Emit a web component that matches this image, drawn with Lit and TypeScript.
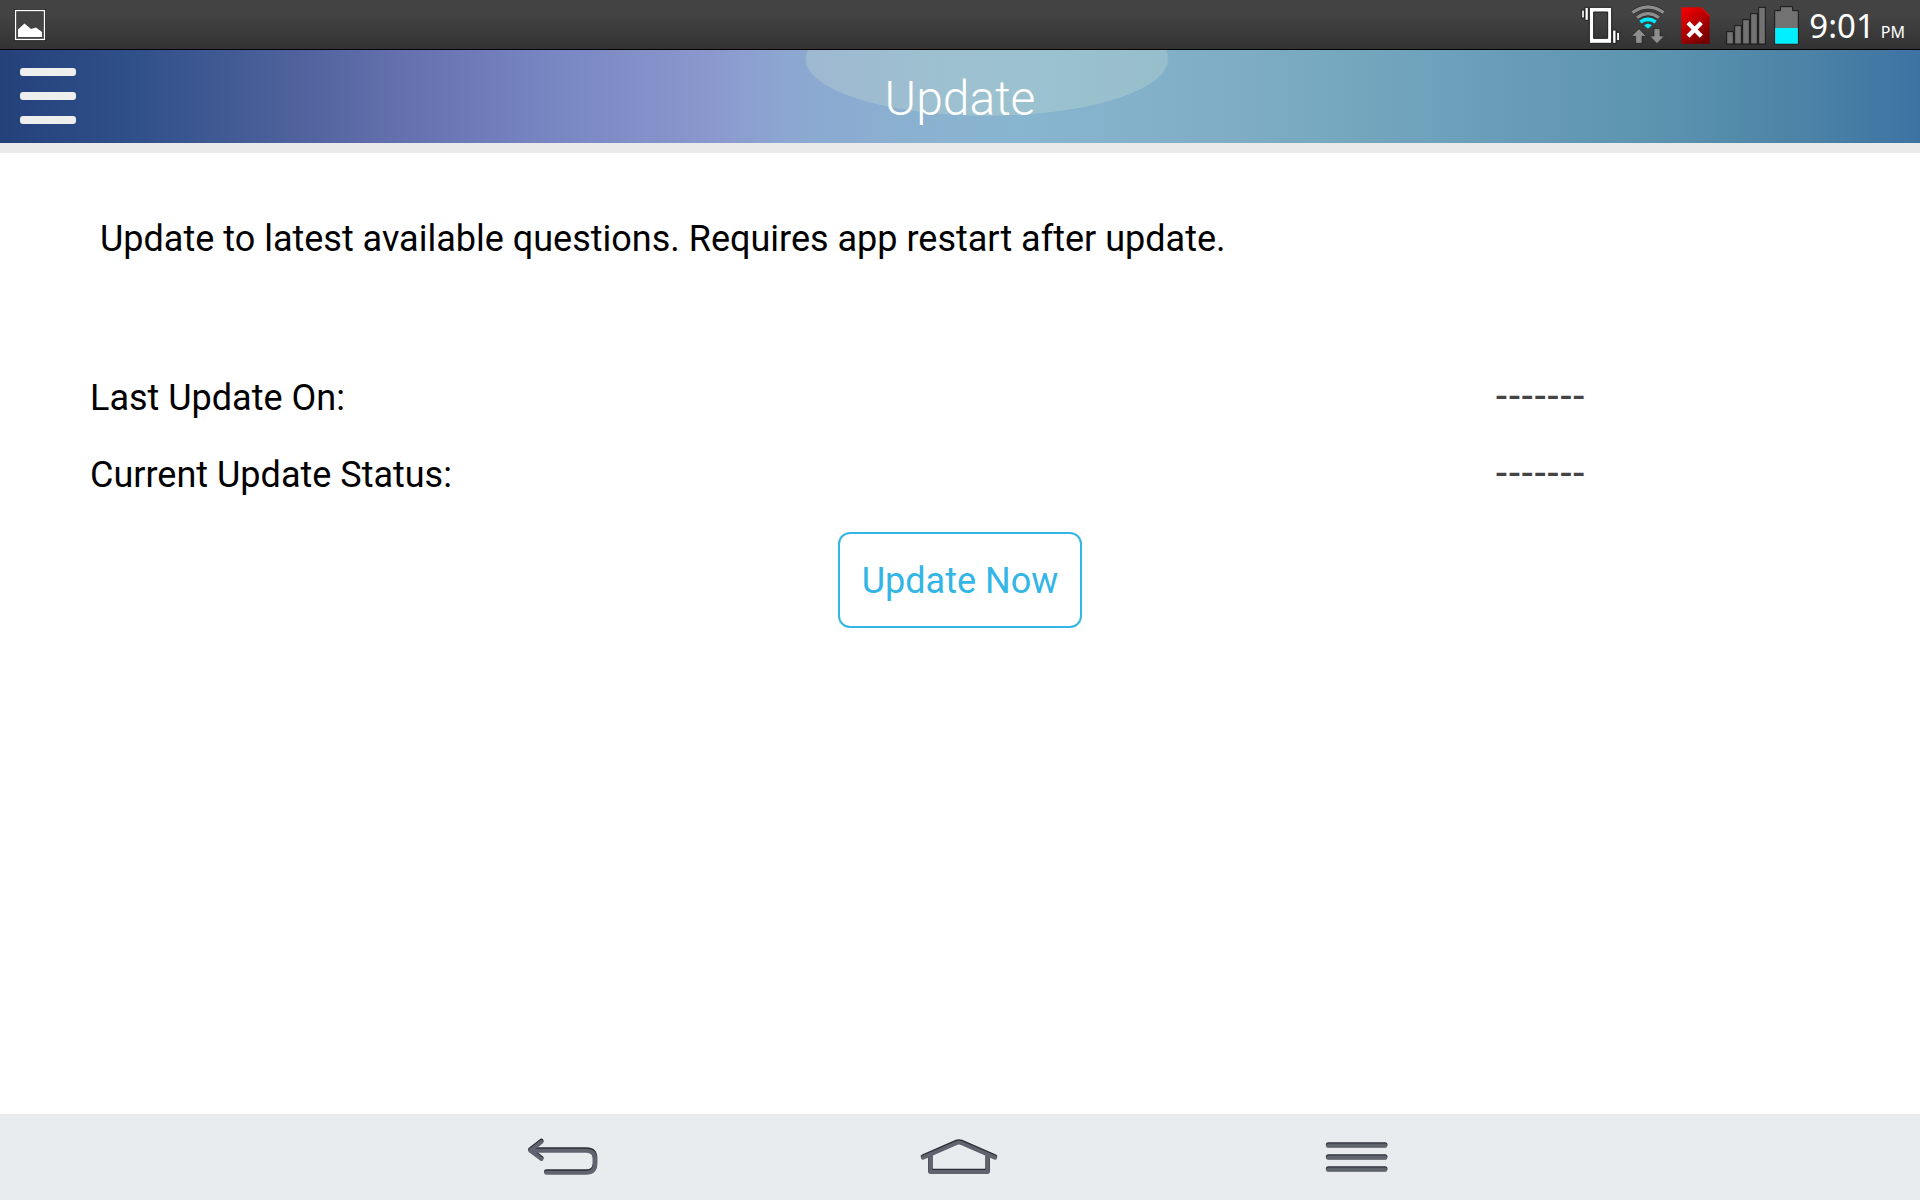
import { LitElement, html, css, svg } from "lit";
import { customElement, state } from "lit/decorators.js";

@customElement("status-bar")
class StatusBar extends LitElement {
  static styles = css`
    :host {
      display: flex;
      justify-content: space-between;
      box-sizing: border-box;
      height: 50px;
      padding: 4px 15px 3px 14px;
      border-bottom: 1px solid #000;
      background: linear-gradient(#434343 30%, #323232);
      color: #fff;
      font-family: "Noto Sans", sans-serif;
    }
    svg {
      display: block;
      height: 42px;
    }
    .tray {
      display: flex;
    }
    .clock {
      display: flex;
      align-items: baseline;
      gap: 6px;
      margin-left: 4px;
      font-size: 33px;
      line-height: 44px;
    }
    .half {
      font-size: 16px;
    }
  `;

  render() {
    return html`
      <svg width="34" viewBox="0 0 34 42" aria-label="Screenshot saved" role="img">
        <rect x="0" y="5" width="32" height="32" fill="#1b1b1b" />
        <rect x="1.5" y="6.5" width="29" height="29" fill="#444" stroke="#fff" stroke-width="1.3" />
        <path d="M4 33V25.5L10.5 19.5L17 25L22 23.5L28 28V33Z" fill="#fff" />
      </svg>
      <div class="tray">
        <svg width="45" viewBox="30 12 135 126" aria-label="Vibrate" role="img">
          <g stroke="#1c1c1c" stroke-width="3" fill="#fff">
            <path fill-rule="evenodd" d="M58 22H125V130H58ZM71 36V115H113V36Z" />
            <path d="M45 22H55V61H45ZM35 30H43V54H35ZM128 90H138V130H128ZM140 97H149V122H140Z" />
          </g>
        </svg>
        <svg width="48" viewBox="165 12 144 126" aria-label="Wi-Fi" role="img">
          <g fill="none" stroke="#1f1f1f" stroke-width="13">
            <path d="M187 38Q234 4 281 38M201 53Q234 29 267 53" />
          </g>
          <g fill="none" stroke="#8e8e8e" stroke-width="10">
            <path d="M187 38Q234 4 281 38M201 53Q234 29 267 53" />
          </g>
          <path d="M211 66Q234 50 257 66" fill="none" stroke="#00e8ff" stroke-width="11" />
          <path d="M222 76Q234 67 246 76L234 86Z" fill="#00e8ff" />
          <g fill="#8e8e8e" stroke="#1f1f1f" stroke-width="2">
            <path d="M207 86L229 109H216V130H197V109H184Z" />
            <path d="M261 131L283 108H270V86H252V108H239Z" />
          </g>
        </svg>
        <svg width="45" viewBox="309 12 135 126" aria-label="No SIM card" role="img">
          <defs>
            <linearGradient id="sim" x1="0" y1="0" x2="0.6" y2="1">
              <stop offset="0.1" stop-color="#f00000" />
              <stop offset="1" stop-color="#780000" />
            </linearGradient>
          </defs>
          <path d="M334 22H395L419 46V131H334Z" fill="url(#sim)" />
          <path d="M395 22L419 46V52L390 24Z" fill="#d01010" />
          <path d="M354 68L394 109M394 68L354 109" stroke="#fff" stroke-width="13" fill="none" />
        </svg>
        <svg width="52" viewBox="444 12 156 126" aria-label="No signal" role="img">
          <g fill="#727272" stroke="#181818" stroke-width="3">
            ${[95, 77, 59, 41, 22].map(
              (top, i) => svg`<rect x=${470 + i * 24} y=${top} width="20" height=${132 - top} />`
            )}
          </g>
        </svg>
        <svg width="35" viewBox="600 12 105 126" aria-label="Battery" role="img">
          <path d="M614 132V32H631V20H668V32H685V132Z" fill="#727272" stroke="#181818" stroke-width="3" />
          <rect x="615.5" y="84" width="68" height="47" fill="#00f0ff" />
        </svg>
        <div class="clock"><span>9:01</span><span class="half">PM</span></div>
      </div>
    `;
  }
}

@customElement("title-bar")
class TitleBar extends LitElement {
  static styles = css`
    :host {
      display: grid;
      grid-template-columns: 1fr auto 1fr;
      align-items: center;
      box-sizing: border-box;
      height: 103px;
      padding: 0 20px;
      border-bottom: 10px solid #eaeaea;
      background: radial-gradient(182px 57px at 51.4% 9px, rgba(214, 231, 208, 0.25) 99%, transparent 100%),
        linear-gradient(
          90deg,
          #24417a 0%,
          #30508a 7%,
          #4d619b 15%,
          #6571ae 21%,
          #7684c1 28%,
          #8b98ce 37%,
          #8ca7d1 41%,
          #8ab3d0 49%,
          #87b5cf 54%,
          #7fadc6 64%,
          #75a8be 70%,
          #689bb8 79%,
          #5c94b0 86%,
          #4c83a6 94%,
          #3c73a3 100%
        );
      background-origin: padding-box;
      background-clip: padding-box;
      background-color: #eaeaea;
    }
    .menu {
      display: flex;
      flex-direction: column;
      gap: 16px;
      width: 56px;
      padding: 0 0 2px;
      border: 0;
      background: none;
    }
    .bar {
      width: 56px;
      height: 8px;
      border-radius: 3px;
      background: #eee;
    }
    .title {
      margin: 0;
      padding-top: 4px;
      color: #fff;
      font: 300 48px/56px Roboto, sans-serif;
    }
  `;

  render() {
    return html`
      <button class="menu" aria-label="Menu">
        <span class="bar"></span><span class="bar"></span><span class="bar"></span>
      </button>
      <h1 class="title">Update</h1>
    `;
  }
}

@customElement("navigation-bar")
class NavigationBar extends LitElement {
  static styles = css`
    :host {
      display: flex;
      justify-content: center;
      align-items: center;
      gap: 255px;
      height: 86px;
      background: #e8ecef;
    }
    .key {
      width: 140px;
      height: 86px;
      padding: 0;
      border: 0;
      background: none;
    }
    svg {
      display: block;
      width: 140px;
      height: 86px;
      fill: none;
      stroke-linecap: round;
      stroke-linejoin: round;
    }
    .edge {
      stroke: #2b2e36;
    }
    .face {
      stroke: #60646f;
    }
  `;

  private key(label: string, d: string, width: number) {
    return html`
      <button class="key" aria-label=${label}>
        <svg viewBox="0 42 420 258">
          <path class="edge" d=${d} stroke-width=${width} transform="translate(0 -2)" />
          <path class="face" d=${d} stroke-width=${width - 2} transform="translate(0 1)" />
        </svg>
      </button>
    `;
  }

  render() {
    return html`
      ${this.key("Back", "M139 125L106 151L139 176M109 151H274Q300 151 300 177V191Q300 217 274 217H154", 14)}
      ${this.key("Home", "M99 172L200 128Q207 125 214 128L315 172M121 168V215H293V168", 14)}
      ${this.key("Recent menu", "M130 136H300M130 172H300M130 208H300", 15)}
    `;
  }
}

@customElement("app-root")
class AppRoot extends LitElement {
  static styles = css`
    :host {
      display: flex;
      flex-direction: column;
      min-height: 100vh;
      background: #fff;
      color: #000;
      font: 36px/48px Roboto, "Noto Sans", sans-serif;
    }
    .content {
      flex: 1;
      display: flex;
      flex-direction: column;
      padding: 62px 90px 0;
    }
    .intro {
      margin: 0;
      padding-left: 10px;
    }
    .facts {
      display: grid;
      grid-template-columns: 1fr 335px;
      row-gap: 29px;
      margin: 111px 0 33px;
    }
    .value {
      margin: 0;
      color: #444;
      font-family: "Noto Sans", sans-serif;
      font-size: 40px;
      line-height: 38px;
    }
    .update {
      align-self: center;
      padding: 23px 22px 21px;
      border: 2px solid #33b5e5;
      border-radius: 12px;
      background: #fff;
      color: #33b5e5;
      font: inherit;
    }
  `;

  @state() private facts = [
    { label: "Last Update On:", value: "-------" },
    { label: "Current Update Status:", value: "-------" },
  ];

  render() {
    return html`
      <status-bar></status-bar>
      <title-bar></title-bar>
      <main class="content">
        <p class="intro">Update to latest available questions. Requires app restart after update.</p>
        <dl class="facts">
          ${this.facts.map((f) => html`<dt>${f.label}</dt><dd class="value">${f.value}</dd>`)}
        </dl>
        <button class="update">Update Now</button>
      </main>
      <navigation-bar></navigation-bar>
    `;
  }
}
